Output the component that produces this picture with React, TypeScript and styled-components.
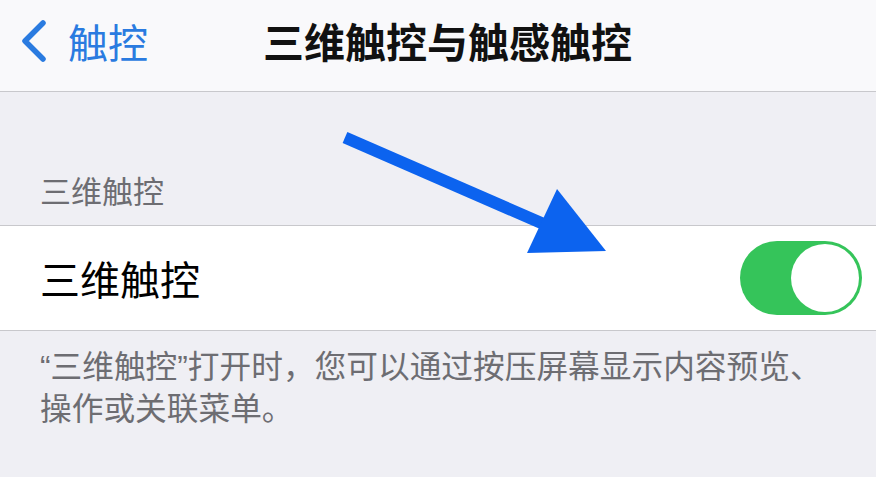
import styled, { createGlobalStyle } from 'styled-components';

const GlobalStyle = createGlobalStyle`
  html, body {
    margin: 0;
    padding: 0;
    background: #efeff4;
  }
  body {
    font-family: "Liberation Sans", "Noto Sans CJK SC", sans-serif;
    -webkit-font-smoothing: antialiased;
  }
`;

const Page = styled.div`
  position: relative;
  width: 876px;
  height: 477px;
  overflow: hidden;
  background: #efeff4;
`;

const NavBar = styled.header`
  display: flex;
  align-items: center;
  height: 92px;
  padding: 0 0 10px 21px;
  box-sizing: border-box;
  background: #f9f9fb;
  border-bottom: 1px solid #c8c8cc;
`;

const BackButton = styled.button`
  display: flex;
  align-items: center;
  gap: 21px;
  padding: 0;
  border: none;
  background: transparent;
  color: #2a7be0;
  font-family: "Noto Sans CJK SC", sans-serif;
  font-size: 40px;
  line-height: 1;
  cursor: pointer;
`;

const Title = styled.h1`
  margin: 0 0 0 115px;
  font-family: "Noto Sans CJK SC", sans-serif;
  font-size: 41px;
  font-weight: 700;
  color: #111;
  line-height: 1;
`;

const SectionHeader = styled.div`
  padding: 78px 40px 15px;
  font-family: "Noto Sans CJK SC", sans-serif;
  font-size: 31px;
  line-height: 40px;
  color: #6d6d72;
`;

const Cell = styled.div`
  display: flex;
  align-items: center;
  justify-content: space-between;
  height: 106px;
  padding: 0 14px 0 40px;
  box-sizing: border-box;
  background: #fff;
  border-top: 1px solid #c8c8cc;
  border-bottom: 1px solid #c8c8cc;
`;

const CellLabel = styled.span`
  font-family: "Noto Sans CJK SC", sans-serif;
  font-size: 40px;
  color: #000;
`;

const Toggle = styled.button<{ $on: boolean }>`
  position: relative;
  width: 122px;
  height: 74px;
  padding: 0;
  border: none;
  border-radius: 37px;
  background: ${(p) => (p.$on ? '#35c45a' : '#e5e5ea')};
  cursor: pointer;

  &::after {
    content: '';
    position: absolute;
    top: 3px;
    left: ${(p) => (p.$on ? '51px' : '3px')};
    width: 68px;
    height: 68px;
    border-radius: 50%;
    background: #fff;
  }
`;

const Footer = styled.p`
  margin: 0;
  padding: 15px 40px;
  font-family: "Liberation Sans", "Noto Sans CJK SC", sans-serif;
  font-size: 31.7px;
  line-height: 42px;
  color: #6d6d72;
`;

const ArrowOverlay = styled.svg`
  position: absolute;
  top: 0;
  left: 0;
  pointer-events: none;
`;

const Chevron = () => (
  <svg width="26" height="44" viewBox="0 0 26 44" fill="none">
    <path
      d="M22 4 L4 22 L22 40"
      stroke="#2a7be0"
      strokeWidth="5.5"
      strokeLinecap="round"
      strokeLinejoin="round"
    />
  </svg>
);

export default function App() {
  return (
    <>
      <GlobalStyle />
      <Page>
        <NavBar>
          <BackButton>
            <Chevron />
            触控
          </BackButton>
          <Title>三维触控与触感触控</Title>
        </NavBar>

        <SectionHeader>三维触控</SectionHeader>

        <Cell>
          <CellLabel>三维触控</CellLabel>
          <Toggle $on aria-label="三维触控" />
        </Cell>

        <Footer>
          “三维触控”打开时，您可以通过按压屏幕显示内容预览、
          <br />
          操作或关联菜单。
        </Footer>

        {/* annotation arrow drawn over the screenshot */}
        <ArrowOverlay width="876" height="477" viewBox="0 0 876 477">
          <line x1="345" y1="137.5" x2="562" y2="232" stroke="#0c63ef" strokeWidth="12" />
          <polygon points="557,189 606,251 527,253" fill="#0c63ef" />
        </ArrowOverlay>
      </Page>
    </>
  );
}
